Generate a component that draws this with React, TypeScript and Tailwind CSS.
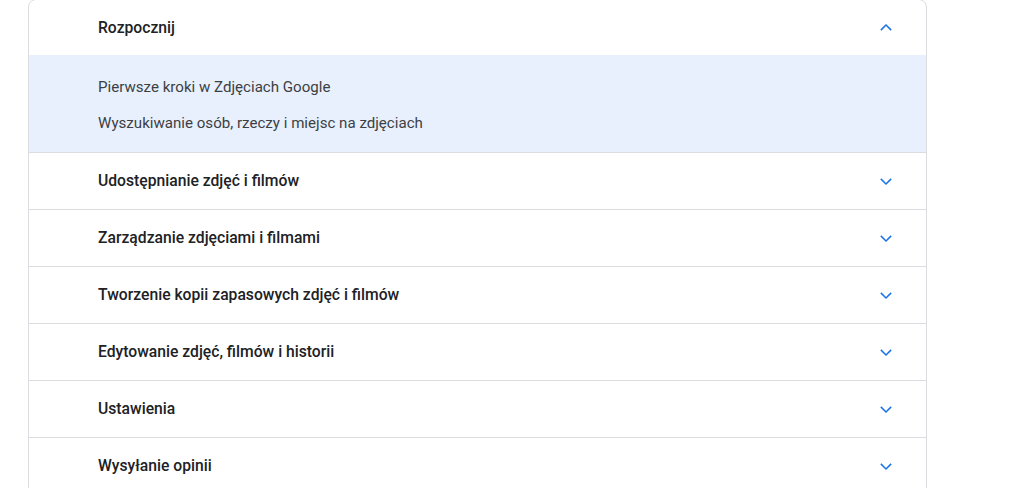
import React from 'react';

const sections = [
  'Udostępnianie zdjęć i filmów',
  'Zarządzanie zdjęciami i filmami',
  'Tworzenie kopii zapasowych zdjęć i filmów',
  'Edytowanie zdjęć, filmów i historii',
  'Ustawienia',
  'Wysyłanie opinii',
];

function Chevron({ up = false }: { up?: boolean }) {
  return (
    <svg width="24" height="24" viewBox="0 0 24 24" className={up ? 'rotate-180' : ''}>
      <path d="M7.4 9.3 12 13.9l4.6-4.6 1.1 1.1L12 16.1l-5.7-5.7z" fill="#1a73e8" />
    </svg>
  );
}

export default function App() {
  return (
    <div className="h-[488px] overflow-hidden bg-white" style={{ fontFamily: 'Roboto, "Noto Sans", sans-serif' }}>
      <div className="ml-[28px] -mt-px w-[899px] rounded-lg border border-[#dadce0] bg-white overflow-hidden">
        <div className="flex h-[55px] items-center justify-between pl-[69px] pr-[28px]">
          <span className="text-[15.7px] font-medium text-[#202124]">Rozpocznij</span>
          <Chevron up />
        </div>
        <div className="bg-[#e8f0fe] pl-[69px] pt-[14px] pb-[11px] border-b border-[#dadce0]">
          <div className="flex h-9 items-center text-[15.1px] text-[#3c4043]">Pierwsze kroki w Zdjęciach Google</div>
          <div className="flex h-9 items-center text-[15.1px] text-[#3c4043]">Wyszukiwanie osób, rzeczy i miejsc na zdjęciach</div>
        </div>
        {sections.map((s) => (
          <div key={s} className="flex h-[57px] items-center justify-between border-b border-[#dadce0] pl-[69px] pr-[28px]">
            <span className="text-[15.7px] font-medium text-[#202124]">{s}</span>
            <Chevron />
          </div>
        ))}
      </div>
    </div>
  );
}
